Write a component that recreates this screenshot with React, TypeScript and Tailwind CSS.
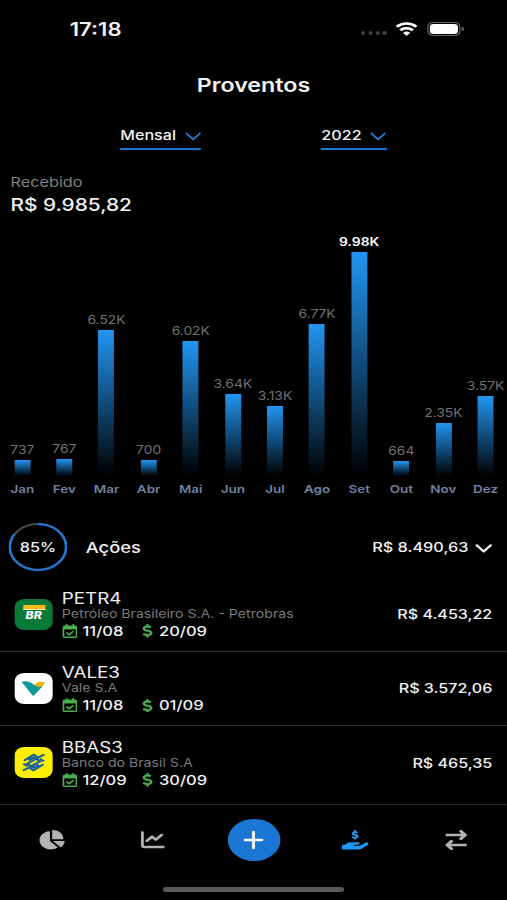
import React from 'react';
import {
  FaArrowRightArrowLeft,
  FaChartLine,
  FaChartPie,
  FaDollarSign,
  FaHandHoldingDollar,
  FaRegCalendarCheck,
} from 'react-icons/fa6';

interface MonthEntry {
  month: string;
  value: number;
  label: string;
  active?: boolean;
}

interface Asset {
  ticker: string;
  name: string;
  exDate: string;
  payDate: string;
  amount: string;
  logo: React.ReactNode;
}

// px per R$ 1.000
const BAR_SCALE = 22.4;

const months: MonthEntry[] = [
  { month: 'Jan', value: 737, label: '737' },
  { month: 'Fev', value: 767, label: '767' },
  { month: 'Mar', value: 6520, label: '6.52K' },
  { month: 'Abr', value: 700, label: '700' },
  { month: 'Mai', value: 6020, label: '6.02K' },
  { month: 'Jun', value: 3640, label: '3.64K' },
  { month: 'Jul', value: 3130, label: '3.13K' },
  { month: 'Ago', value: 6770, label: '6.77K' },
  { month: 'Set', value: 9980, label: '9.98K', active: true },
  { month: 'Out', value: 664, label: '664' },
  { month: 'Nov', value: 2350, label: '2.35K' },
  { month: 'Dez', value: 3570, label: '3.57K' },
];

const PetrobrasLogo = () => (
  <div className="w-[31px] h-[31px] rounded-[8px] bg-[#087a37] flex flex-col items-center pt-[6.5px]">
    <div className="w-[18px] h-[5px] bg-[#fdb913] border-b border-[#fff3cf]" />
    <div className="w-[16px] h-[9px] flex items-center justify-center text-[10px] leading-none font-extrabold italic text-white">BR</div>
  </div>
);

const ValeLogo = () => (
  <svg className="w-[31px] h-[31px] rounded-[8px] bg-white" viewBox="0 0 31 31">
    <path d="M14.5 12.5C17 11.5 17.5 8.7 21 8.7c1.7 0 2.7.5 4 .2L22 14.5C19 14.8 17.5 14.5 14.5 12.5Z" fill="#edb111" />
    <path d="M5.5 8.8c3.5-1 6.5-.8 9.3 2.2 2.6 2.8 5 3.4 7.8 2.6L15.2 23.2Z" fill="#0b9a97" />
  </svg>
);

const BancoBrasilLogo = () => (
  <svg className="w-[31px] h-[31px] rounded-[8px] bg-[#fcf000]" viewBox="0 0 31 31" fill="none" stroke="#17609a" strokeWidth="2">
    <path d="M7.5 13.7l8-6 3.2 2.3M11.2 13.4l4.3-2.900 5.200 3.700-9.500 6.600-4.500 2.700" />
    <path d="M23.500 17.300l-8 6-3.200-2.300M19.800 17.600l-4.300 2.900-5.200-3.700 9.500-6.600 4.500-2.700" />
    <path d="M7 16.800l3.500 2.500M24 14.200l-3.500-2.500" />
  </svg>
);

const assets: Asset[] = [
  { ticker: 'PETR4', name: 'Petróleo Brasileiro S.A. - Petrobras', exDate: '11/08', payDate: '20/09', amount: 'R$ 4.453,22', logo: <PetrobrasLogo /> },
  { ticker: 'VALE3', name: 'Vale S.A', exDate: '11/08', payDate: '01/09', amount: 'R$ 3.572,06', logo: <ValeLogo /> },
  { ticker: 'BBAS3', name: 'Banco do Brasil S.A', exDate: '12/09', payDate: '30/09', amount: 'R$ 465,35', logo: <BancoBrasilLogo /> },
];

const Chevron = ({ className }: { className: string }) => (
  <svg className={className} viewBox="0 0 14 9" fill="none" stroke="currentColor" strokeLinecap="round" strokeLinejoin="round">
    <path d="M1.3 1.3L7 7.5l5.7-6.2" />
  </svg>
);

const StatusBar = () => (
  <div className="h-[59px] pl-[57px] pr-[35.5px] flex items-center justify-between">
    <span className="text-[18px] font-semibold">17:18</span>
    <div className="flex items-center mb-[2px]">
      <div className="flex gap-[2.6px] mt-[9px] mr-[7.5px]">
        <span className="w-[3.2px] h-1 rounded-full bg-[#3f3f3f]" />
        <span className="w-[3.2px] h-1 rounded-full bg-[#3f3f3f]" />
        <span className="w-[3.2px] h-1 rounded-full bg-[#3f3f3f]" />
        <span className="w-[3.2px] h-1 rounded-full bg-[#3f3f3f]" />
      </div>
      <svg className="w-[18px] h-[14px] mr-[7.5px]" viewBox="0 0 18 14" fill="none" stroke="#fff" strokeWidth="2.7">
        <path d="M1 4.8a11.3 11.3 0 0 1 16 0" />
        <path d="M3.9 8.3a7.2 7.2 0 0 1 10.2 0" />
        <path d="M9 13.8L6 10.9a4.3 4.3 0 0 1 6 0Z" fill="#fff" stroke="none" />
      </svg>
      <div className="w-[27.5px] h-[14px] rounded-[4.5px] border border-[#666] p-[1px]">
        <div className="w-full h-full rounded-[3px] bg-white" />
      </div>
      <div className="w-[1.5px] h-1 ml-[1px] rounded-r-full bg-[#666]" />
    </div>
  </div>
);

const Select = ({ label }: { label: string }) => (
  <button className="h-[26px] pb-[1px] flex items-center gap-[7px] border-b-2 border-[#1b76cf] text-[13.2px] font-medium">
    <span>{label}</span>
    <Chevron className="w-[13.5px] h-[9px] stroke-[1.6] text-[#1f82dd] mt-[1px]" />
  </button>
);

const Chart = () => (
  <div className="h-[266px] pl-[1px] flex items-end">
    {months.map((m) => (
      <div key={m.month} className="w-[34.4px] flex flex-col items-center">
        <span className={`text-[11.3px] leading-4 mb-[2px] ${m.active ? 'font-semibold text-white' : 'text-[#727272]'}`}>{m.label}</span>
        <div
          className="w-[13px] bg-linear-to-b/srgb from-[#2196f3] to-black"
          style={{ height: (m.value / 1000) * BAR_SCALE }}
        />
        <span className="mt-[5px] text-[11px] leading-4 font-semibold text-[#7182a0]">{m.month}</span>
      </div>
    ))}
  </div>
);

const Gauge = ({ percent }: { percent: number }) => (
  <div className="relative w-12 h-12 flex items-center justify-center">
    <svg className="absolute inset-0 -rotate-90" viewBox="0 0 48 48" fill="none" strokeWidth="2">
      <circle cx="24" cy="24" r="23" stroke="#4a4a4a" />
      <circle cx="24" cy="24" r="23" stroke="#1f7ad6" pathLength="100" strokeDasharray={`${percent} 100`} />
    </svg>
    <span className="mt-[1px] text-[13.2px] font-medium">{percent}%</span>
  </div>
);

const AssetRow = ({ asset }: { asset: Asset }) => (
  <div className="h-[74.2px] pl-3 pr-3 flex items-center border-b-[1.5px] border-[#363636] last:border-b-0">
    {asset.logo}
    <div className="ml-[7.5px] mt-[1px] flex-1">
      <div className="text-[15.3px] leading-[17px] pt-px">{asset.ticker}</div>
      <div className="text-[11.55px] leading-[15px] text-[#7a7a7a]">{asset.name}</div>
      <div className="flex items-center text-[13.5px] leading-[18px] font-medium">
        <FaRegCalendarCheck className="w-[12.3px] h-[14px] text-[#4caf50]" stroke="currentColor" strokeWidth="12" />
        <span className="w-[49px] ml-[4.5px]">{asset.exDate}</span>
        <FaDollarSign className="w-[9px] h-[13.5px] text-[#4caf50]" stroke="currentColor" strokeWidth="16" />
        <span className="ml-[4.5px]">{asset.payDate}</span>
      </div>
    </div>
    <span className="mt-[2px] text-[13.15px] font-medium">{asset.amount}</span>
  </div>
);

const TabBar = () => (
  <div className="h-[96px] border-t-[1.5px] border-[#2c2c2c] flex flex-col items-center">
    <div className="w-full h-[70px] pl-[1px] grid grid-cols-5 items-center justify-items-center text-[#b3b3b3]">
      <FaChartPie className="w-[22px] h-[19.5px]" />
      <FaChartLine className="w-[19.5px] h-[19.5px]" />
      <button className="w-[42.5px] h-[42.5px] rounded-full bg-[#1976d2] flex items-center justify-center">
        <svg className="w-4 h-[18px]" viewBox="0 0 16 18" stroke="#fff" strokeWidth="2.3" strokeLinecap="round">
          <path d="M8 1v16M.9 9h14.2" />
        </svg>
      </button>
      <FaHandHoldingDollar className="w-[22px] h-[19.5px] text-[#2196f3]" />
      <FaArrowRightArrowLeft className="w-[19px] h-[20px]" />
    </div>
    <div className="w-[148px] h-[5px] mt-[12px] rounded-full bg-[#5a5a5a]" />
  </div>
);

export default function App() {
  return (
    <div className="w-[507px] h-[900px] overflow-hidden bg-black">
      {/* 414pt wide screen stretched to the full width */}
      <div className="w-[414px] h-[900px] origin-top-left scale-x-[1.2246] flex flex-col bg-black text-[#f2f2f2] font-['Inter',sans-serif]">
        <StatusBar />
        <h1 className="h-[51px] pt-[3px] flex items-center justify-center text-[19px] font-semibold">Proventos</h1>

        <div className="mt-[14px] flex justify-evenly">
          <Select label="Mensal" />
          <Select label="2022" />
        </div>

        <div className="mt-[23px] pl-[8.5px]">
          <div className="text-[13.3px] leading-[18px] text-[#808080]">Recebido</div>
          <div className="pt-[1px] text-[17px] leading-[26px] font-medium">R$ 9.985,82</div>
        </div>

        <div className="mt-[13px]">
          <Chart />
        </div>

        <div className="mt-[26px] h-12 pl-[7px] pr-3 flex items-center">
          <Gauge percent={85} />
          <span className="ml-[15px] mt-[2px] flex-1 text-[15px] font-medium">Ações</span>
          <span className="mt-[2px] text-[13.3px] font-medium">R$ 8.490,63</span>
          <Chevron className="w-[14px] h-[9px] ml-[5.5px] stroke-2 mt-[2px]" />
        </div>

        <div className="mt-[6.5px] flex-1">
          {assets.map((asset) => (
            <AssetRow key={asset.ticker} asset={asset} />
          ))}
        </div>

        <TabBar />
      </div>
    </div>
  );
}
